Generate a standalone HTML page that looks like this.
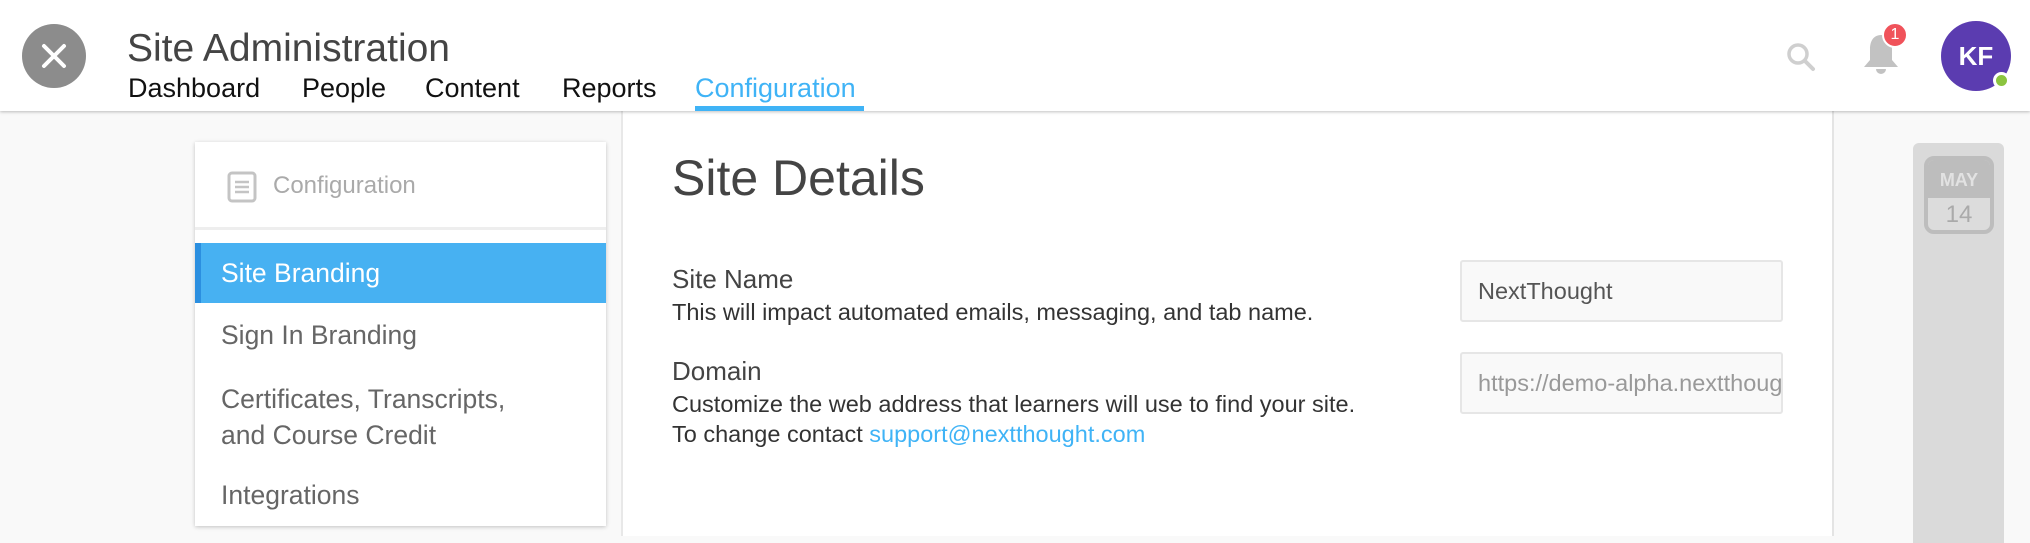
<!DOCTYPE html>
<html><head><meta charset="utf-8"><style>
*{margin:0;padding:0;box-sizing:border-box}
body{width:2030px;height:536px;overflow:hidden;background:#f9f9f9;font-family:"Liberation Sans",sans-serif;position:relative}
.hdr{position:absolute;left:0;top:0;width:2030px;height:111px;background:#fff;box-shadow:0 1px 3px rgba(0,0,0,.25);z-index:3}
.close{position:absolute;left:22px;top:24px;width:64px;height:64px;border-radius:50%;background:#8c8c8c}
.title{position:absolute;left:127px;top:27px;font-size:39px;color:#444;white-space:nowrap}
.nav{position:absolute;top:73px;font-size:27px;color:#111;white-space:nowrap}
.ul{position:absolute;left:695px;top:106px;width:169px;height:5px;background:#3fb3f6}
.abs{position:absolute}
.main{position:absolute;left:621px;top:111px;width:1213px;height:425px;background:#fff;border-left:2px solid #e8e8e8;border-right:2px solid #e4e4e4}
.card{position:absolute;left:195px;top:142px;width:411px;height:384px;background:#fff;box-shadow:0 1px 4px rgba(0,0,0,.22)}
.item{position:absolute;left:26px;font-size:26.5px;color:#666;white-space:nowrap;line-height:44px}
.lbl{position:absolute;left:672px;font-size:26px;color:#444;white-space:nowrap}
.desc{position:absolute;left:672px;font-size:23.5px;color:#333;white-space:nowrap}
.inp{position:absolute;left:1460px;width:323px;height:62px;background:#f9f9f9;border:2px solid #e6e6e6;border-radius:3px;font-size:23.5px;padding-left:16px;line-height:58px;overflow:hidden;white-space:nowrap}
</style></head><body>
<div class="hdr">
 <div class="close"><svg width="64" height="64" viewBox="0 0 64 64"><path d="M22 22L42 42M42 22L22 42" stroke="#fff" stroke-width="4" stroke-linecap="round"/></svg></div>
 <div class="title">Site Administration</div>
 <div class="nav" style="left:128px">Dashboard</div>
 <div class="nav" style="left:302px">People</div>
 <div class="nav" style="left:425px">Content</div>
 <div class="nav" style="left:562px">Reports</div>
 <div class="nav" style="left:695px;color:#3fb3f6">Configuration</div>
 <div class="ul"></div>
 <svg class="abs" style="left:1785px;top:41px" width="32" height="32" viewBox="0 0 32 32"><circle cx="13" cy="13" r="9" fill="none" stroke="#cfcfcf" stroke-width="3.5"/><path d="M20 20L28 28" stroke="#cfcfcf" stroke-width="4" stroke-linecap="round"/></svg>
 <svg class="abs" style="left:1860px;top:30px" width="42" height="46" viewBox="0 0 42 46"><path d="M21 5C13 5 10 12 10 19V30L4 37H38L32 30V19C32 12 29 5 21 5Z" fill="#c2c2c2"/><path d="M16 39A5 5 0 0 0 26 39Z" fill="#c2c2c2"/></svg>
 <div class="abs" style="left:1882px;top:22px;width:26px;height:26px;border-radius:50%;background:#f0525a;border:2px solid #fff;color:#fff;font-size:16px;text-align:center;line-height:22px">1</div>
 <div class="abs" style="left:1941px;top:21px;width:70px;height:70px;border-radius:50%;background:#5b3cb0;color:#fff;font-size:26px;font-weight:bold;text-align:center;line-height:70px">KF</div>
 <div class="abs" style="left:1993px;top:72px;width:17px;height:17px;border-radius:50%;background:#8bc43f;border:3px solid #fff"></div>
</div>
<div class="main">
 <div class="abs" style="left:49px;top:38px;font-size:50px;color:#444;white-space:nowrap">Site Details</div>
</div>
<div class="lbl" style="top:264px">Site Name</div>
<div class="desc" style="top:299px">This will impact automated emails, messaging, and tab name.</div>
<div class="lbl" style="top:356px">Domain</div>
<div class="desc" style="top:391px">Customize the web address that learners will use to find your site.</div>
<div class="desc" style="top:421px">To change contact <span style="color:#3fb3f6">support@nextthought.com</span></div>
<div class="inp" style="top:260px;color:#555">NextThought</div>
<div class="inp" style="top:352px;color:#999">https://demo-alpha.nextthought.com</div>
<div class="card">
 <svg class="abs" style="left:32px;top:29px" width="30" height="32" viewBox="0 0 30 32"><rect x="2" y="2" width="26" height="28" rx="3" fill="none" stroke="#c4c4c4" stroke-width="3"/><path d="M8 11H22M8 16H22M8 21H22" stroke="#c4c4c4" stroke-width="2.5"/></svg>
 <div class="abs" style="left:78px;top:30px;font-size:24px;color:#aaa">Configuration</div>
 <div class="abs" style="left:0;top:85px;width:411px;height:3px;background:#eee"></div>
 <div class="abs" style="left:0;top:101px;width:411px;height:60px;background:#47b1f2;border-left:6px solid #2b8fe0"></div>
 <div class="item" style="top:109px;color:#fff">Site Branding</div>
 <div class="item" style="top:171px">Sign In Branding</div>
 <div class="item" style="top:239px;line-height:36px">Certificates, Transcripts,<br>and Course Credit</div>
 <div class="item" style="top:331px">Integrations</div>
</div>
<div class="abs" style="left:1913px;top:143px;width:91px;height:400px;background:#dadada;border-radius:6px 6px 0 0"></div>
<div class="abs" style="left:1924px;top:156px;width:70px;height:78px;border-radius:10px;border:4px solid #bdbdbd;background:#dcdcdc;overflow:hidden">
 <div style="height:38px;background:#bdbdbd;color:#e2e2e2;font-weight:bold;font-size:18px;text-align:center;line-height:40px">MAY</div>
 <div style="color:#aaa;font-size:24px;text-align:center;line-height:34px">14</div>
</div>
</body></html>
